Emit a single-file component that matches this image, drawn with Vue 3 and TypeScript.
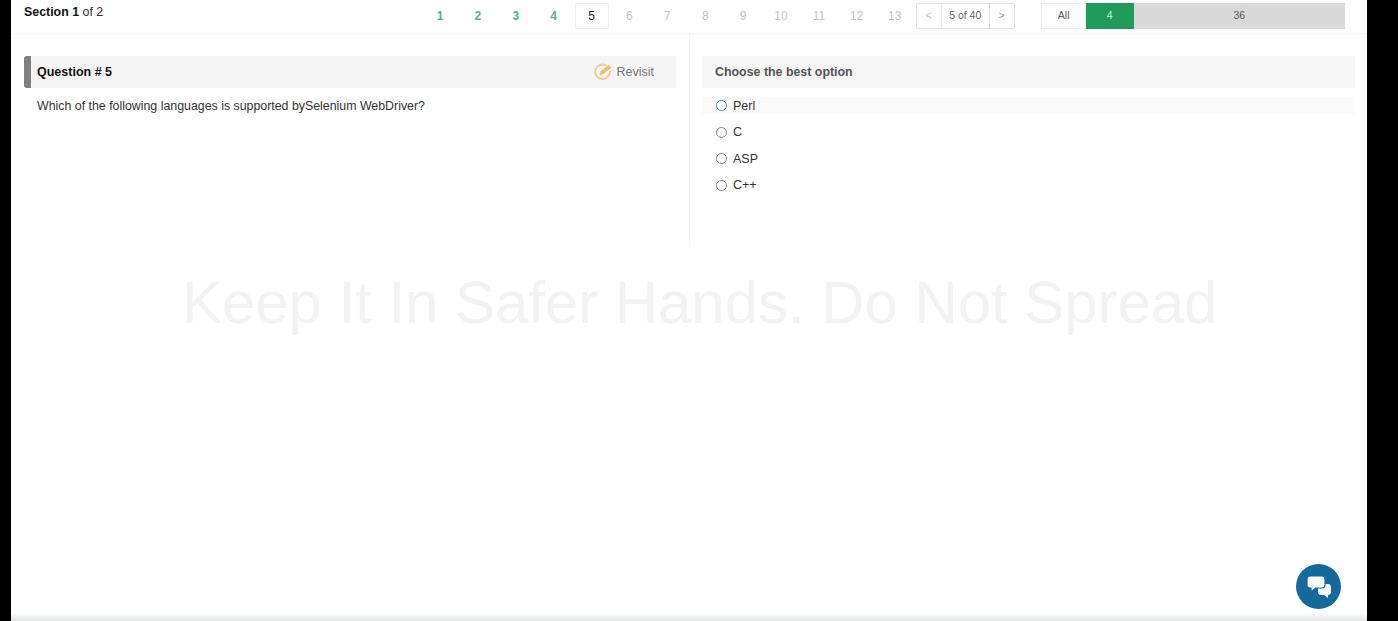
<template>
    <div class="exam-frame">
        <div class="exam-page">
            <header class="exam-header">
                <div class="section-label"><b>Section 1</b> of 2</div>

                <nav class="question-nav">
                    <span
                        v-for="item in questionItems"
                        :key="item.index"
                        class="question-nav-item"
                        :class="item.state"
                    >{{ item.index }}</span>
                </nav>

                <div class="pager">
                    <span class="pager-arrow">&lt;</span>
                    <span class="pager-count">5 of 40</span>
                    <span class="pager-arrow next">&gt;</span>
                </div>

                <div class="filter-bar">
                    <span class="filter-all">All</span>
                    <span class="filter-done">4</span>
                    <span class="filter-left">36</span>
                </div>
            </header>

            <main class="exam-body">
                <section class="question-panel">
                    <div class="question-title">
                        <b>Question # 5</b>
                        <span class="revisit">
                            <svg
                                width="20"
                                height="18"
                                viewBox="0 0 20 18"
                                fill="none"
                            >
                                <path
                                    d="M12.800 2.300A7.300 7.300 0 1 0 16.800 8.500"
                                    stroke="#f3c98f"
                                    stroke-width="1.800"
                                    stroke-linecap="round"
                                />
                                <path
                                    d="M6.500 12.200l1.200-4 7.800-6.400 2.800 2.800-7.800 6.400z"
                                    fill="#f1bd78"
                                />
                            </svg>
                            Revisit
                        </span>
                    </div>
                    <p class="question-text">Which of the following languages is supported bySelenium WebDriver?</p>
                </section>

                <section class="answer-panel">
                    <div class="answer-title">Choose the best option</div>
                    <label
                        v-for="(option, i) in options"
                        :key="option"
                        class="answer-option"
                        :class="{ hovered: i === 0 }"
                    >
                        <span class="radio" />
                        {{ option }}
                    </label>
                </section>
            </main>

            <div class="watermark">Keep It In Safer Hands. Do Not Spread</div>

            <button
                class="chat-button"
                type="button"
                aria-label="Chat"
            >
                <svg
                    width="26"
                    height="24"
                    viewBox="0 0 26 24"
                >
                    <path
                        d="M12 9h10c1.700 0 3 1.300 3 3v5c0 1.700-1.300 3-3 3v3l-3.800-3H15c-1.700 0-3-1.300-3-3z"
                        fill="#fff"
                    />
                    <path
                        d="M4 1h12c1.900 0 3 1.200 3 3v6c0 1.800-1.100 3-3 3H9.500L5 17v-4H4c-1.900 0-3-1.200-3-3V4c0-1.800 1.100-3 3-3z"
                        fill="#fff"
                        stroke="#15699b"
                        stroke-width="1.200"
                    />
                </svg>
            </button>
        </div>
    </div>
</template>

<script
    lang="ts"
    setup
>
    interface QuestionItem {
        index: number,
        state: string,
    }

    const currentQuestion = 5;

    const questionItems: Array<QuestionItem> = Array.from({ length: 13 }, (_, i) => {
        const index = i + 1;
        let state = 'upcoming';
        if (index < currentQuestion) state = 'answered';
        if (index === currentQuestion) state = 'current';
        return { index, state };
    });

    const options: Array<string> = ['Perl', 'C', 'ASP', 'C++'];
</script>

<style>
    html,
    body {
        margin: 0;
        background: #000;
    }
</style>

<style scoped>
    .exam-frame {
        display: flex;
        height: 621px;
        padding: 0 31px 0 11px;
        box-sizing: border-box;
        background: #000;
        font-family: "Liberation Sans", Arial, sans-serif;
        color: #222;
    }

    .exam-page {
        position: relative;
        flex: 1;
        min-width: 0;
        background: linear-gradient(to bottom, #fff 0, #fff 613px, #e2e4e4 621px);
        overflow: hidden;
    }

    .exam-header {
        display: flex;
        height: 34px;
        padding: 3px 22px 0 13px;
        box-sizing: border-box;
        border-bottom: 1px solid #f6f6f6;
    }

    .section-label {
        width: 399px;
        font-size: 12.400px;
        line-height: 18px;
        color: #333;
    }

    .section-label b {
        color: #111;
    }

    .question-nav {
        display: flex;
        gap: 3.900px;
        height: 26px;
    }

    .question-nav-item {
        width: 34px;
        box-sizing: border-box;
        border: 1px solid transparent;
        font-size: 12px;
        line-height: 24px;
        text-align: center;
    }

    .answered {
        color: #55b092;
        font-weight: bold;
    }

    .current {
        color: #222;
        border-color: #ececec;
        border-radius: 3px;
    }

    .upcoming {
        color: #c4c4c4;
    }

    .pager {
        display: flex;
        height: 26px;
        margin-left: 4px;
        box-sizing: border-box;
        border: 1px solid #e6e6e6;
        border-radius: 2px;
        font-size: 10.500px;
        line-height: 23px;
        text-align: center;
    }

    .pager-arrow {
        width: 24px;
        color: #bbb;
    }

    .pager-arrow.next {
        color: #999;
    }

    .pager-count {
        width: 49px;
        box-sizing: border-box;
        border-left: 1px solid #e8e8e8;
        border-right: 1px solid #e0e0e0;
        color: #666;
    }

    .filter-bar {
        display: flex;
        flex: 1;
        height: 26px;
        margin-left: 26px;
        font-size: 10.500px;
        line-height: 25px;
        text-align: center;
    }

    .filter-all {
        width: 45px;
        box-sizing: border-box;
        border: 1px solid #eee;
        border-right: 0;
        line-height: 23px;
        color: #555;
    }

    .filter-done {
        width: 48px;
        background: #1f9a5c;
        color: #cfeedd;
    }

    .filter-left {
        flex: 1;
        background: #d8d8d8;
        color: #555;
    }

    .exam-body {
        display: flex;
        padding: 0 12px 0 13px;
    }

    .question-panel {
        width: 652px;
        padding-top: 22px;
    }

    .question-title {
        display: flex;
        align-items: center;
        justify-content: space-between;
        height: 32px;
        padding: 0 22px 0 6px;
        box-sizing: border-box;
        border-left: 7px solid #808080;
        border-radius: 3px 0 0 3px;
        background: #f5f5f5;
        font-size: 12.500px;
        color: #111;
    }

    .revisit {
        display: flex;
        align-items: center;
        gap: 3px;
        color: #777;
    }

    .question-text {
        margin: 10px 0 0 13px;
        font-size: 12.370px;
        line-height: 16px;
        color: #333;
    }

    .answer-panel {
        width: 666px;
        height: 213px;
        margin-left: 13px;
        padding: 22px 0 0 12px;
        box-sizing: border-box;
        border-left: 1px solid #f5f5f5;
    }

    .answer-title {
        height: 32px;
        padding-left: 13px;
        background: #f6f6f6;
        font-size: 12.400px;
        font-weight: bold;
        line-height: 32px;
        color: #555;
    }

    .answer-option {
        display: flex;
        align-items: center;
        gap: 6px;
        height: 17px;
        margin-top: 9.500px;
        padding-left: 14px;
        font-size: 12.500px;
        color: #333;
    }

    .answer-option:first-of-type {
        margin-top: 9px;
    }

    .answer-option.hovered {
        background: #fafafa;
    }

    .radio {
        width: 11px;
        height: 11px;
        box-sizing: border-box;
        border: 1px solid #888;
        border-radius: 50%;
        background: #fff;
    }

    .hovered .radio {
        border-color: #5f8b9e;
    }

    .watermark {
        position: absolute;
        top: 267px;
        left: 171px;
        font-size: 59.900px;
        line-height: 72px;
        white-space: nowrap;
        color: #f2f2f2;
        pointer-events: none;
    }

    .chat-button {
        position: absolute;
        top: 564px;
        left: 1285px;
        display: flex;
        align-items: center;
        justify-content: center;
        width: 45px;
        height: 45px;
        padding: 0;
        border: 0;
        border-radius: 50%;
        background: #15699b;
    }
</style>
